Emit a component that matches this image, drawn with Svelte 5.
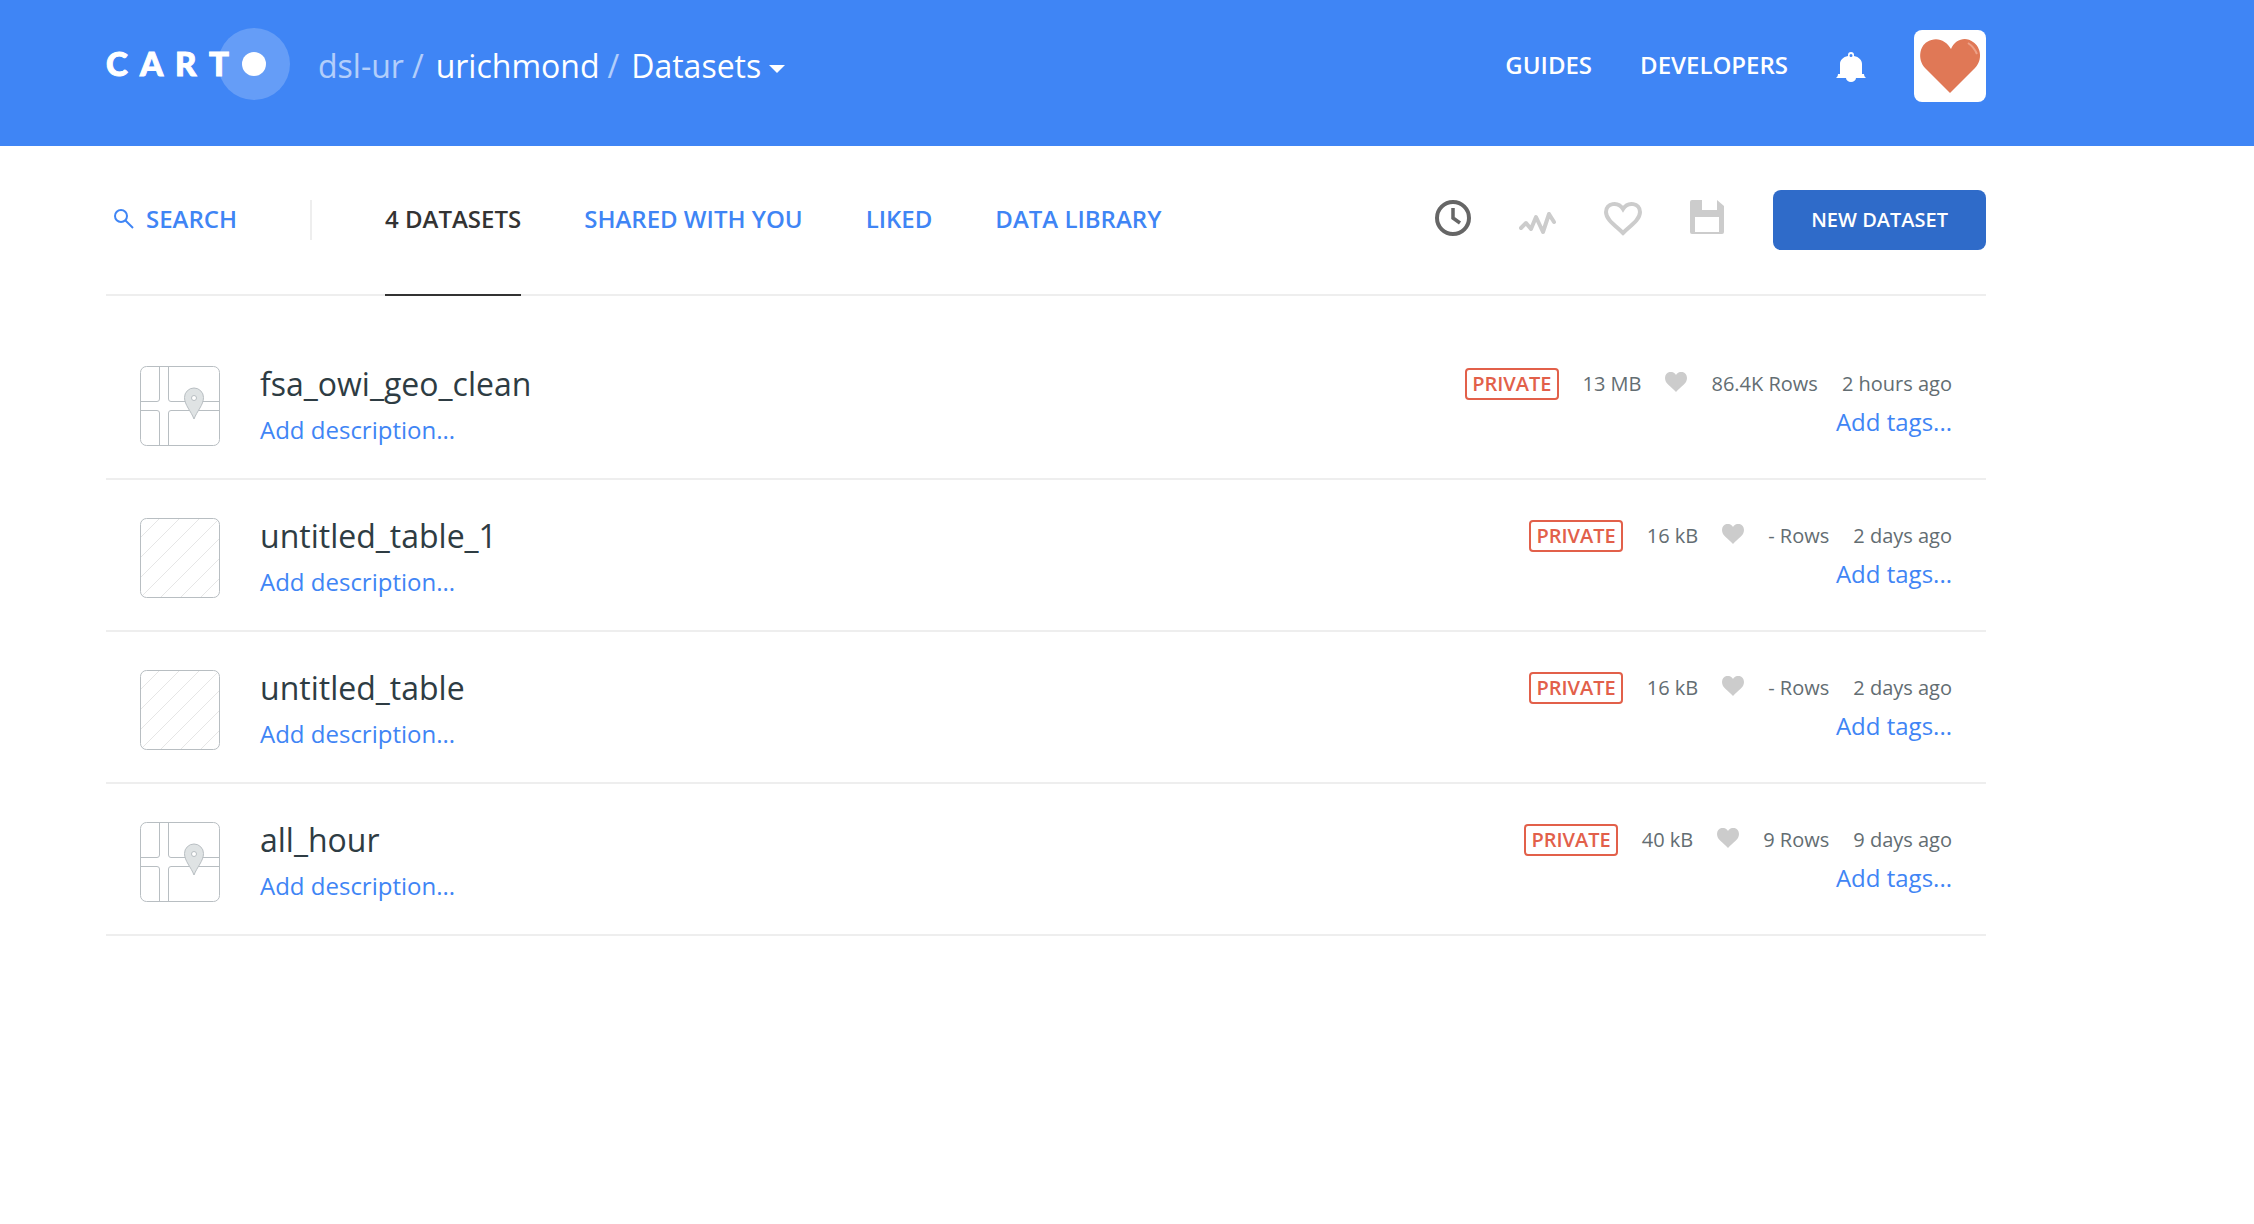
<script>
  const tabs = ['4 DATASETS', 'SHARED WITH YOU', 'LIKED', 'DATA LIBRARY'];
  let active = $state('4 DATASETS');
  const datasets = [
    { name: 'fsa_owi_geo_clean', geo: true, size: '13 MB', rows: '86.4K Rows', time: '2 hours ago' },
    { name: 'untitled_table_1', geo: false, size: '16 kB', rows: '- Rows', time: '2 days ago' },
    { name: 'untitled_table', geo: false, size: '16 kB', rows: '- Rows', time: '2 days ago' },
    { name: 'all_hour', geo: true, size: '40 kB', rows: '9 Rows', time: '9 days ago' }
  ];
</script>

<header class="top">
  <a class="logo" href="#home" aria-label="CARTO">
    <svg width="184" height="72" viewBox="0 0 184 72">
      <circle cx="148" cy="36" r="36" fill="#fff" fill-opacity="0.2" />
      <circle cx="148" cy="36" r="12" fill="#fff" />
      <g class="wordmark" fill="#fff" stroke="#fff">
        <text x="0" y="48">C</text>
        <text x="34" y="48">A</text>
        <text x="69" y="48">R</text>
        <text x="103" y="48">T</text>
      </g>
    </svg>
  </a>
  <nav class="crumbs" aria-label="Breadcrumb">
    <a class="dim" href="#org">dsl-ur</a><span class="slash">/</span>
    <a href="#user">urichmond</a><span class="slash">/</span>
    <button class="section">Datasets
      <svg width="16" height="16" viewBox="0 0 16 16"><path d="M0 7h16L8 15z" fill="#fff" /></svg>
    </button>
  </nav>
  <nav class="links" aria-label="Main">
    <a href="#guides">GUIDES</a>
    <a href="#developers">DEVELOPERS</a>
  </nav>
  <button class="bell" aria-label="Notifications">
    <svg width="30" height="30" viewBox="0 0 30 30" fill="#fff">
      <path fill-rule="evenodd" d="M15 0a3 3 0 0 1 3 3v1c5 1 8 4 8 8v10h2c0 2 1 3 2 4H20a5 4 0 0 1-10 0H0c1-1 2-2 2-4h2V12c0-4 3-7 8-8V3a3 3 0 0 1 3-3zm0 2a1 1 0 0 0 0 3a1 1 0 0 0 0-3z" />
    </svg>
  </button>
  <button class="avatar" aria-label="Account">
    <svg width="72" height="72" viewBox="0 0 72 72">
      <path d="M36 63L11 38C3 29 6 16 13 12C22 6 32 10 37 19C41 9 52 6 59 12C67 17 69 30 61 38Z" fill="#e07856" />
      <path d="M54 13Q60 17 63 24" fill="none" stroke="#eda188" stroke-width="2" />
    </svg>
  </button>
</header>

<main>
  <div class="filters">
    <button class="search">
      <svg width="20" height="20" viewBox="0 0 20 20" fill="none" stroke="currentColor" stroke-width="2">
        <circle cx="7" cy="7" r="6" /><path d="M11.500 11.500L19 19" />
      </svg>
      SEARCH
    </button>
    <span class="divider"></span>
    <nav class="tabs" aria-label="Datasets">
      {#each tabs as tab}
        <button class:active={tab === active} onclick={() => (active = tab)}>{tab}</button>
      {/each}
    </nav>
    <div class="orders">
      <button class="current" aria-label="Order by date">
        <svg width="38" height="36" viewBox="0 0 38 36" fill="none" stroke="currentColor" stroke-width="4">
          <circle cx="19" cy="18" r="16" /><path d="M19 8v10l7 5" stroke-width="3.500" />
        </svg>
      </button>
      <button aria-label="Order by visits">
        <svg width="38" height="36" viewBox="0 0 38 36" fill="none" stroke="currentColor" stroke-width="4" stroke-linecap="round" stroke-linejoin="round">
          <path d="M2 28l5-5l5 6l5-12l7 15l6-18l5 8" />
        </svg>
      </button>
      <button aria-label="Order by likes">
        <svg width="38" height="36" viewBox="0 0 38 36" fill="none" stroke="currentColor" stroke-width="4">
          <path d="M19 33C12 26 2 20 2 12C2 3 14 1 19 9C24 1 36 3 36 12C36 20 26 26 19 33z" />
        </svg>
      </button>
      <button aria-label="Order by size">
        <svg width="38" height="36" viewBox="0 0 38 36" fill="currentColor">
          <path fill-rule="evenodd" d="M3 0h10v10h15V0l7 6v26q0 2-2 2H3q-2 0-2-2V2q0-2 2-2zM6 17v15h24V17z" />
        </svg>
      </button>
    </div>
    <button class="new">NEW DATASET</button>
  </div>

  <ul class="list">
    {#each datasets as d}
      <li>
        <svg class="thumb" width="80" height="80" viewBox="0 0 80 80" fill="none" stroke="#b8bec2">
          {#if d.geo}
            <path d="M19.500 0v33q0 2.500-2.500 2.500H0M28.500 0v33q0 2.500 2.500 2.500H80M0 44.500h17q2.500 0 2.500 2.500v33M80 44.500H31q-2.500 0-2.500 2.500v33" />
            <path d="M54 53C51 45 44.500 39 44.500 31.500a9.500 9.500 0 0 1 19 0C63.500 39 57 45 54 53z" fill="#dfe3e4" />
            <circle cx="54" cy="32" r="2.500" fill="#fff" />
          {:else}
            <path d="M1 19L19 1M1 39L39 1M1 59L59 1M2 78L78 2M21 79L79 21M41 79L79 41M61 79L79 61" stroke="#e6e6e6" />
          {/if}
          <rect x="0.500" y="0.500" width="79" height="79" rx="6" />
        </svg>
        <div class="info">
          <h3><a href="#{d.name}">{d.name}</a></h3>
          <button class="add">Add description...</button>
        </div>
        <div class="side">
          <div class="meta">
            <button class="privacy">PRIVATE</button>
            <span>{d.size}</span>
            <button class="like" aria-label="Like {d.name}">
              <svg width="22" height="20" viewBox="0 0 22 20"><path d="M11 20C6 14 0 12 0 6C0-1 8-2 11 3C14-2 22-1 22 6C22 12 16 14 11 20z" fill="#ccc" /></svg>
            </button>
            <span>{d.rows}</span>
            <span>{d.time}</span>
          </div>
          <button class="add">Add tags...</button>
        </div>
      </li>
    {/each}
  </ul>
</main>

<style>
  :global(body) {
    margin: 0;
    background: #fff;
    font-family: 'Open Sans', sans-serif;
    font-size: 24px;
    line-height: 36px;
    color: #333;
  }
  button {
    margin: 0;
    padding: 0;
    border: 0;
    background: none;
    font: inherit;
    color: inherit;
    cursor: pointer;
  }
  a {
    color: inherit;
    text-decoration: none;
  }
  svg {
    display: block;
    flex: none;
  }
  .top {
    display: flex;
    align-items: center;
    box-sizing: border-box;
    height: 146px;
    padding: 0 268px 14px 106px;
    background: #3f85f5;
    color: #fff;
  }
  .logo {
    margin-right: 28px;
    padding-bottom: 4px;
  }
  .wordmark {
    font: 900 33px Lato, sans-serif;
  }
  .crumbs {
    display: flex;
    font-size: 32px;
    line-height: 44px;
  }
  .dim,
  .slash {
    opacity: 0.6;
  }
  .slash {
    margin: 0 12px 0 8px;
  }
  .section {
    display: flex;
    align-items: center;
    gap: 8px;
  }
  .links {
    display: flex;
    gap: 48px;
    margin-left: auto;
    padding-bottom: 2px;
    font-weight: 600;
  }
  .bell {
    margin: 0 48px;
    padding-top: 2px;
  }
  .avatar {
    border-radius: 8px;
    background: #fff;
  }
  main {
    padding: 0 268px 0 106px;
  }
  .filters {
    display: flex;
    align-items: center;
    box-sizing: border-box;
    height: 150px;
    border-bottom: 2px solid #eee;
    font-weight: 600;
    color: #3f85f5;
  }
  .search {
    display: flex;
    align-items: center;
    gap: 12px;
    padding: 0 0 2px 8px;
  }
  .divider {
    width: 2px;
    height: 40px;
    margin: 0 73px;
    background: #eee;
  }
  .tabs {
    display: flex;
    gap: 63px;
    align-self: stretch;
    margin-bottom: -2px;
  }
  .tabs button {
    padding-bottom: 2px;
    border-bottom: 2px solid transparent;
  }
  .tabs .active {
    border-bottom-color: #333;
    color: #333;
  }
  .orders {
    display: flex;
    gap: 47px;
    margin-left: auto;
    padding-bottom: 4px;
    color: #ccc;
  }
  .orders .current {
    color: #666;
  }
  .new {
    height: 60px;
    margin-left: 46px;
    padding: 0 38px;
    border-radius: 8px;
    background: #2f6bc9;
    color: #fff;
    font-size: 20px;
  }
  .list {
    margin: 0;
    padding: 32px 0 0;
    list-style: none;
  }
  li {
    display: flex;
    align-items: flex-start;
    gap: 40px;
    padding: 34px 34px 30px;
    border-bottom: 2px solid #eee;
  }
  .thumb {
    margin: 4px 0 2px;
  }
  .info {
    flex: 1;
  }
  h3 {
    margin: 0 0 6px;
    font-size: 32px;
    font-weight: 400;
    line-height: 44px;
    color: #2e3c43;
  }
  .add {
    display: block;
    color: #3f85f5;
  }
  .side {
    display: flex;
    flex-direction: column;
    align-items: flex-end;
    gap: 4px;
    padding-top: 6px;
  }
  .meta {
    display: flex;
    align-items: center;
    gap: 24px;
    font-size: 20px;
    line-height: 28px;
    color: #636d72;
  }
  .privacy {
    padding: 0 5px;
    border: 2px solid #e2604a;
    border-radius: 4px;
    color: #e2604a;
    font-weight: 600;
  }
  .like {
    padding-bottom: 4px;
  }
</style>
